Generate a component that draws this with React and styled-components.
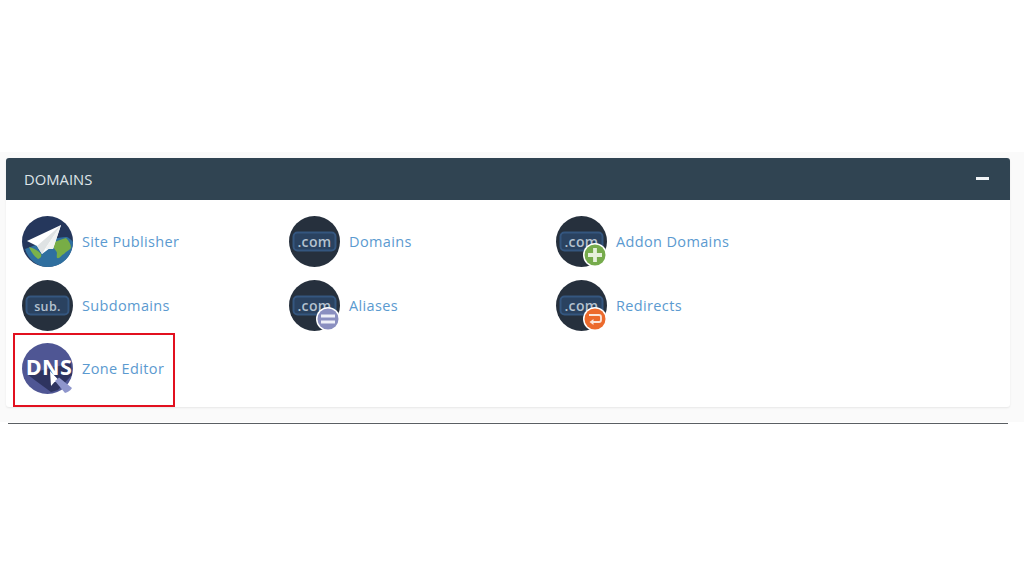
import React from 'react'
import styled, { createGlobalStyle } from 'styled-components'

const GlobalStyle = createGlobalStyle`
  html, body { margin: 0; background: #fff; }
  body { font-family: "Open Sans", "Liberation Sans", sans-serif; }
`

const Page = styled.div`
  width: 1024px;
  height: 576px;
  padding-top: 152px;
  box-sizing: border-box;
  overflow: hidden;
`

const Backdrop = styled.div`
  background: #fafafa;
  padding: 6px 14px 0 6px;
  height: 270px;
  box-sizing: border-box;
`

const Rule = styled.div`
  height: 1px;
  margin: 1px 16px 0 8px;
  background: #5a5f63;
`

const Panel = styled.section`
  background: #fff;
  border-radius: 3px;
  overflow: hidden;
  box-shadow: 0 1px 2px rgba(0, 0, 0, 0.08);
`

const PanelHeader = styled.header`
  height: 42px;
  background: #304452;
  display: flex;
  align-items: center;
  justify-content: space-between;
  padding: 0 21px 1px 18px;
  box-sizing: border-box;
  color: #dde3e7;
  font-size: 14.8px;
`

const Collapse = styled.span`
  width: 13px;
  height: 3px;
  background: #f2f5f7;
`

const Grid = styled.div`
  display: grid;
  grid-template-columns: repeat(3, 267px);
  grid-auto-rows: 63.5px;
  padding: 16px 0 0 16px;
`

const Item = styled.a`
  position: relative;
  display: flex;
  align-items: flex-start;
  gap: 9px;
  color: #5b9ad0;
  font-size: 14.5px;
  letter-spacing: 0.36px;

  ${p => p.$marked && `
    &::after {
      content: "";
      position: absolute;
      left: -9px;
      top: -10px;
      width: 158px;
      height: 70px;
      border: 2px solid #e2101f;
    }
  `}
`

const Label = styled.span`
  line-height: 51px;
`

const IconSvg = styled.svg`
  width: 51px;
  height: 51px;
  flex: none;
  display: block;
`

const IconWord = styled.text`
  font-family: "Open Sans", "Liberation Sans", sans-serif;
  font-weight: ${p => p.$weight};
  font-size: ${p => p.$size}px;
  fill: ${p => p.$fill};
  text-anchor: middle;
`

function PlaneIcon() {
  return (
    <IconSvg viewBox="0 0 51 51">
      <circle cx="25.5" cy="25.5" r="25.5" fill="#25375c" />
      <path d="M3 33c8-3 16-6 24-9 8-2 13-3 18-3 4 2 6 5 6 5 0 14-11 25-25.500 25C15 51 6 43 3 33z" fill="#2f6f9f" />
      <path d="M7 31c4 1 10 4 12 7 1 3-1 4-3 5-4-3-7-7-9-12z" fill="#7bb24a" />
      <path d="M30 27c5-2 10-4 14-5 3 3 5 6 5 10-2 3-5 3-7 6-3 1-4 5-7 4-1-3 1-5-1-7-2-3-4-5-4-8z" fill="#78ad46" />
      <path d="M39 9 5 25l10 5 5 8 8-6 3 1z" fill="#fff" />
      <path d="M39 9 15 30l5 8 3-5z" fill="#dfe3e4" />
      <path d="M39 9 23 33l8 0z" fill="#f1f3f3" />
    </IconSvg>
  )
}

function WordIcon({ word, badge }) {
  const isSub = word === 'sub.'
  return (
    <IconSvg viewBox="0 0 51 51">
      <circle cx="25.5" cy="25.5" r="25.5" fill="#26303d" />
      <rect x="4.500" y="16.500" width="42" height="18" rx="4" fill="#2a4260" stroke="#34567f" strokeWidth="2" />
      <IconWord x="25.5" y="30.5" $size={isSub ? 12.5 : 14} $weight={600} $fill="#b4c1cf">{word}</IconWord>
      {badge === 'plus' && (
        <g>
          <circle cx="39" cy="39" r="12" fill="#fff" />
          <circle cx="39" cy="39" r="10.5" fill="#76ab4c" />
          <path d="M39 32v14M32 39h14" stroke="#e6f0dc" strokeWidth="3.800" />
        </g>
      )}
      {badge === 'equal' && (
        <g>
          <circle cx="39" cy="39" r="12" fill="#fff" />
          <circle cx="39" cy="39" r="10.5" fill="#8a8fc0" />
          <path d="M32 36h14M32 42h14" stroke="#eef0f8" strokeWidth="3" />
        </g>
      )}
      {badge === 'redirect' && (
        <g>
          <circle cx="39" cy="39" r="12" fill="#fff" />
          <circle cx="39" cy="39" r="10.5" fill="#ec6a2c" />
          <path d="M33 35h10c2 0 2 1 2 2v3c0 2-1 2-2 2H36" fill="none" stroke="#fbe6da" strokeWidth="1.800" />
          <path d="M37.500 39 33.500 42l4 3z" fill="#fbe6da" />
        </g>
      )}
    </IconSvg>
  )
}

function DnsIcon() {
  return (
    <IconSvg viewBox="0 0 51 51">
      <circle cx="25.5" cy="25.5" r="25.5" fill="#4f5694" />
      <path d="M5 31 49 20l1 12-14 15-7 2-15-11z" fill="#2e3460" />
      <IconWord x="27" y="32" $size={21.500} $weight={700} $fill="#fff">DNS</IconWord>
      <path d="M28 28l1 15 3.500-4 5-1z" fill="#fff" />
      <path d="M33 38l4-3.500L50 45c-2 3-4 4-7 5z" fill="#8f96cc" />
    </IconSvg>
  )
}

const items = [
  { label: 'Site Publisher', icon: <PlaneIcon /> },
  { label: 'Domains', icon: <WordIcon word=".com" /> },
  { label: 'Addon Domains', icon: <WordIcon word=".com" badge="plus" /> },
  { label: 'Subdomains', icon: <WordIcon word="sub." /> },
  { label: 'Aliases', icon: <WordIcon word=".com" badge="equal" /> },
  { label: 'Redirects', icon: <WordIcon word=".com" badge="redirect" /> },
  { label: 'Zone Editor', icon: <DnsIcon />, marked: true },
]

export default function App() {
  return (
    <Page>
      <GlobalStyle />
      <Backdrop>
        <Panel>
          <PanelHeader>
            DOMAINS
            <Collapse />
          </PanelHeader>
          <Grid>
            {items.map(item => (
              <Item key={item.label} $marked={item.marked}>
                {item.icon}
                <Label>{item.label}</Label>
              </Item>
            ))}
          </Grid>
        </Panel>
      </Backdrop>
      <Rule />
    </Page>
  )
}
